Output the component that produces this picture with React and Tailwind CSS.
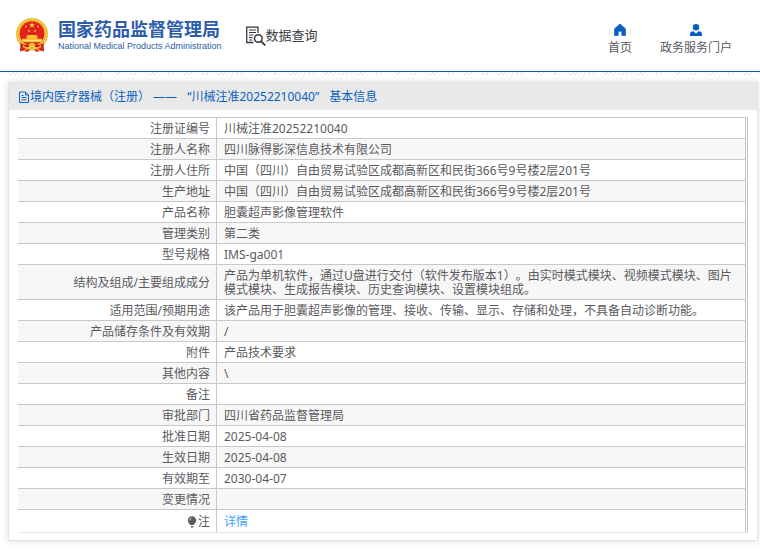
import React from "react";

const rows = [
  ["注册证编号", "川械注准20252210040"],
  ["注册人名称", "四川脉得影深信息技术有限公司"],
  ["注册人住所", "中国（四川）自由贸易试验区成都高新区和民街366号9号楼2层201号"],
  ["生产地址", "中国（四川）自由贸易试验区成都高新区和民街366号9号楼2层201号"],
  ["产品名称", "胆囊超声影像管理软件"],
  ["管理类别", "第二类"],
  ["型号规格", "IMS-ga001"],
  [
    "结构及组成/主要组成成分",
    "产品为单机软件，通过U盘进行交付（软件发布版本1）。由实时模式模块、视频模式模块、图片模式模块、生成报告模块、历史查询模块、设置模块组成。",
  ],
  ["适用范围/预期用途", "该产品用于胆囊超声影像的管理、接收、传输、显示、存储和处理，不具备自动诊断功能。"],
  ["产品储存条件及有效期", "/"],
  ["附件", "产品技术要求"],
  ["其他内容", "\\"],
  ["备注", ""],
  ["审批部门", "四川省药品监督管理局"],
  ["批准日期", "2025-04-08"],
  ["生效日期", "2025-04-08"],
  ["有效期至", "2030-04-07"],
  ["变更情况", ""],
];

function Emblem() {
  return (
    <svg viewBox="0 0 32 35" className="h-[35px] w-8 shrink-0" aria-hidden="true">
      <path d="M4.500 24 4 33.500l4-1 3 1.500 5-3 5 3 3-1.500 4 1L27.500 24Z" fill="#d9201a" />
      <circle cx="16" cy="16" r="16" fill="#f2b52e" />
      <circle cx="16" cy="16" r="14.300" fill="none" stroke="#fbd45c" strokeWidth="1.200" strokeDasharray="2 1.200" />
      <circle cx="16" cy="15.500" r="12.300" fill="#e3231b" />
      <path d="m16 4.300 .8 2h2.100l-1.700 1.300.7 2.100-1.900-1.300-1.900 1.300.7-2.100-1.700-1.300h2.100Z" fill="#fbd23f" />
      <g fill="#f8bd32">
        <circle cx="10" cy="8.500" r="1" />
        <circle cx="22" cy="8.500" r="1" />
        <circle cx="13" cy="13" r="1" />
        <circle cx="19" cy="13" r="1" />
        <path d="M10.500 18.500 12 17h8l1.500 1.500v2.200h4.500v3.500H6v-3.500h4.500Z" />
      </g>
      <path d="M7 22.500h18" stroke="#fbe38a" strokeWidth="1" />
      <path d="M4 25c4 2 7 3 12 1 5 2 8 1 12-1l-1 3c-3 1.500-6 2-8 1l-3-1-3 1c-2 1-5 .5-8-1Z" fill="#cf1b18" />
      <circle cx="16" cy="28" r="3.300" fill="#f5c237" />
      <path d="M7 27.500c1 2 4 3 6 2.500M25 27.500c-1 2-4 3-6 2.500" fill="none" stroke="#f5c237" strokeWidth="1.300" />
      <path d="m8 32.500 4-2M24 32.500l-4-2" stroke="#f5b52f" strokeWidth="1" />
    </svg>
  );
}

function SearchDocIcon() {
  return (
    <svg viewBox="0 0 20 20" className="h-5 w-5 shrink-0" fill="none" stroke="#35333f" aria-hidden="true">
      <path d="M7.500 16.500H.7V1.200H12V7" strokeWidth="1.300" />
      <path d="M3 4h7M3 6.500h7M3 9h4.500M3 11.500h3.500M3 14h3.500" strokeWidth="1" />
      <circle cx="12.300" cy="12.500" r="3.800" strokeWidth="1.500" />
      <path d="m15.200 15.300 4 4" strokeWidth="1.900" />
    </svg>
  );
}

function HomeIcon() {
  return (
    <svg viewBox="0 0 12 12" className="h-3 w-3" fill="#0b5fbd" aria-hidden="true">
      <path d="M6 0 .5 4.800V11.500h3.700V7.200h3.600v4.300h3.700V4.800Z" stroke="#0b5fbd" strokeWidth=".7" strokeLinejoin="round" />
    </svg>
  );
}

function PersonIcon() {
  return (
    <svg viewBox="0 0 12 12" className="h-3 w-3" fill="#0b5fbd" aria-hidden="true">
      <circle cx="6" cy="3.200" r="3.200" />
      <path d="M0 12V10Q0 7.500 3.500 7.200L6 9.500 8.500 7.200Q12 7.500 12 10V12Z" />
    </svg>
  );
}

function FileIcon() {
  return (
    <svg viewBox="0 0 12 12" className="h-3 w-3 shrink-0" fill="none" stroke="#0b5fbd" aria-hidden="true">
      <path d="M1.500 1h6l3 3v7.500h-9ZM7.500 1v3h3M3.500 4.500h2M3.500 6.500h5M3.500 8.800h5" />
    </svg>
  );
}

function BulbIcon() {
  return (
    <svg viewBox="0 0 10 12" className="h-3 w-2.5" fill="#5c5c62" aria-hidden="true">
      <path d="M5 .3a4.200 4.200 0 0 1 4.200 4.200C9.200 6.700 7.200 7.300 7 9H3C2.800 7.300.8 6.700.8 4.500A4.200 4.200 0 0 1 5 .3ZM3.600 10h2.800l-.5 1.500H4.100Z" />
      <path d="M2.500 4.500Q2.600 2.500 4.500 2" fill="none" stroke="#ddd" strokeWidth=".8" />
    </svg>
  );
}

export default function App() {
  return (
    <div className="bg-white font-['Noto_Sans','Noto_Sans_CJK_SC',sans-serif] text-xs text-[#5a5a5e] [text-spacing-trim:space-all]">
      <header className="border-b border-[#0b5fae]">
        <div className="flex h-[71px] items-center pr-7 pl-4">
          <a href="#" className="flex items-center gap-2.5 text-[#2c5caa]">
            <Emblem />
            <span className="flex flex-col whitespace-nowrap">
              <span className="text-lg leading-5 font-bold">国家药品监督管理局</span>
              <span className="font-['Liberation_Sans',sans-serif] text-[9px] leading-[14px]">
                National Medical Products Administration
              </span>
            </span>
          </a>
          <a href="#" className="ml-6 flex items-center whitespace-nowrap text-[13px] text-[#3c3c44]">
            <SearchDocIcon />
            数据查询
          </a>
          <nav className="ml-auto flex gap-7 pt-2 whitespace-nowrap">
            <a href="#" className="flex flex-col items-center gap-1">
              <HomeIcon />
              首页
            </a>
            <a href="#" className="flex flex-col items-center gap-1">
              <PersonIcon />
              政务服务门户
            </a>
          </nav>
        </div>
      </header>
      <div className="h-[3px] bg-[repeating-linear-gradient(135deg,#e6e9e4_0_1px,#ffffff_1px_3px)]" />

      <main className="pt-[7px] pr-0.5 pb-2 pl-2">
        <section className="border border-[#e4e4e6] bg-white shadow-[0_0_8px_rgba(0,0,0,0.12)]">
          <h1 className="flex h-[27px] items-center gap-2.5 bg-[#e9e9e9] pl-[9px] whitespace-nowrap text-[#0b5fbd]">
            <span className="flex items-center">
              <FileIcon />
              境内医疗器械（注册） ——
            </span>
            <span>“川械注准20252210040”</span>
            <span>基本信息</span>
          </h1>
          <div className="px-[9px] py-[7px]">
            <table className="w-full border-separate border-spacing-0 border-r border-b border-r-[#c8c8cc] border-b-[#e8e8f2] pr-px leading-[14px]">
              <tbody>
                {rows.map(([label, value]) => (
                  <tr key={label} className="h-[21px] even:bg-[#f7f7f7]">
                    <th
                      scope="row"
                      className="w-[199px] border-t border-r border-[#c8c8cc] pt-1 pr-1.5 pb-0.5 text-right font-normal"
                    >
                      {label}
                    </th>
                    <td className="border-t border-r border-[#c8c8cc] pt-1 pr-2.5 pb-0.5 pl-[7px]">{value}</td>
                  </tr>
                ))}
                <tr className="h-[23px]">
                  <th
                    scope="row"
                    className="w-[199px] border-t border-r border-[#c8c8cc] pt-1 pr-1.5 pb-0.5 font-normal"
                  >
                    <span className="flex items-center justify-end gap-px">
                      <BulbIcon />注
                    </span>
                  </th>
                  <td className="border-t border-r border-[#c8c8cc] pt-1 pb-0.5 pl-[7px]">
                    <a href="#" className="text-[#409eff]">
                      详情
                    </a>
                  </td>
                </tr>
              </tbody>
            </table>
          </div>
        </section>
      </main>
    </div>
  );
}
